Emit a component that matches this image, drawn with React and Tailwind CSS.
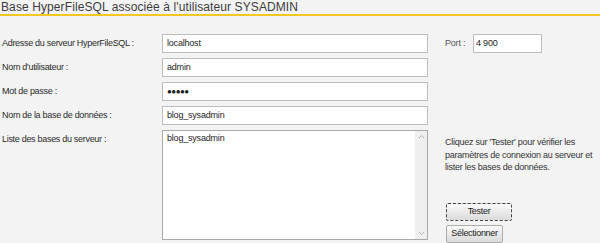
import React from "react";

const font = { fontFamily: '"Liberation Sans", Arial, sans-serif' };

function Field({ value, w = "w-[266px]", pad = "pl-[4px]" }) {
  return (
    <div
      className={`${w} h-[19px] bg-white border border-[#bdbdbd] ${pad} flex items-center text-[9px] text-[#1e1e1e] tracking-[-0.2px]`}
    >
      {value}
    </div>
  );
}

function Label({ children }) {
  return (
    <div className="w-[162px] pl-[2px] text-[9px] text-[#2b2b2b] tracking-[-0.3px]">
      {children}
    </div>
  );
}

function Btn({ children, focused, w }) {
  return (
    <div
      className={`${w} h-[18px] flex items-center justify-center text-[9px] text-[#222] tracking-[-0.3px] whitespace-nowrap rounded-[2px] bg-gradient-to-b from-[#fafafa] to-[#dadada] ${
        focused ? "border border-dashed border-[#444]" : "border border-[#acacac]"
      }`}
    >
      {children}
    </div>
  );
}

export default function App() {
  return (
    <div className="w-[600px] h-[243px] bg-[#f3f3f3] overflow-hidden" style={font}>
      <div className="h-[16px] border-b-2 border-[#f6c623] pl-[1px] text-[12px] leading-[14px] text-[#3c3c3c] tracking-[0.1px]">
        Base HyperFileSQL associée à l'utilisateur SYSADMIN
      </div>
      <div className="pt-[18px] flex flex-col gap-[5px]">
        <div className="flex items-center">
          <Label>Adresse du serveur HyperFileSQL :</Label>
          <Field value="localhost" />
          <div className="ml-[17px] w-[28px] text-[9px] text-[#555] tracking-[-0.2px]">Port :</div>
          <Field value="4 900" w="w-[69px]" pad="pl-[2px]" />
        </div>
        <div className="flex items-center">
          <Label>Nom d'utilisateur :</Label>
          <Field value="admin" />
        </div>
        <div className="flex items-center">
          <Label>Mot de passe :</Label>
          <Field value={<span className="text-[8px] tracking-[-0.5px]">●●●●●</span>} />
        </div>
        <div className="flex items-center">
          <Label>Nom de la base de données :</Label>
          <Field value="blog_sysadmin" />
        </div>
        <div className="flex">
          <div className="pt-[3px]">
            <Label>Liste des bases du serveur :</Label>
          </div>
          <div className="w-[266px] h-[110px] bg-white border border-[#a9a9a9] flex">
            <div className="flex-1 pl-[4px] pt-[1px] text-[9px] text-[#1e1e1e] tracking-[-0.2px]">
              blog_sysadmin
            </div>
            <div className="w-[12px] bg-[#efefef] flex flex-col justify-between items-center py-[3px]">
              <svg width="7" height="5" viewBox="0 0 7 5">
                <path d="M1 4 L3.5 1.5 L6 4" fill="none" stroke="#b5b5b5" strokeWidth="1" />
              </svg>
              <svg width="7" height="5" viewBox="0 0 7 5">
                <path d="M1 1 L3.5 3.5 L6 1" fill="none" stroke="#b5b5b5" strokeWidth="1" />
              </svg>
            </div>
          </div>
          <div className="ml-[17px] w-[155px] flex flex-col">
            <div className="pt-[6px] text-[9px] leading-[12.5px] text-[#333] tracking-[-0.25px]">
              Cliquez sur 'Tester' pour vérifier les paramètres de connexion au serveur et lister les bases de données.
            </div>
            <div className="mt-auto ml-[1px] flex flex-col gap-[4px] -mb-[3px]">
              <Btn focused w="w-[66px]">Tester</Btn>
              <Btn w="w-[57px]">Sélectionner</Btn>
            </div>
          </div>
        </div>
      </div>
    </div>
  );
}
